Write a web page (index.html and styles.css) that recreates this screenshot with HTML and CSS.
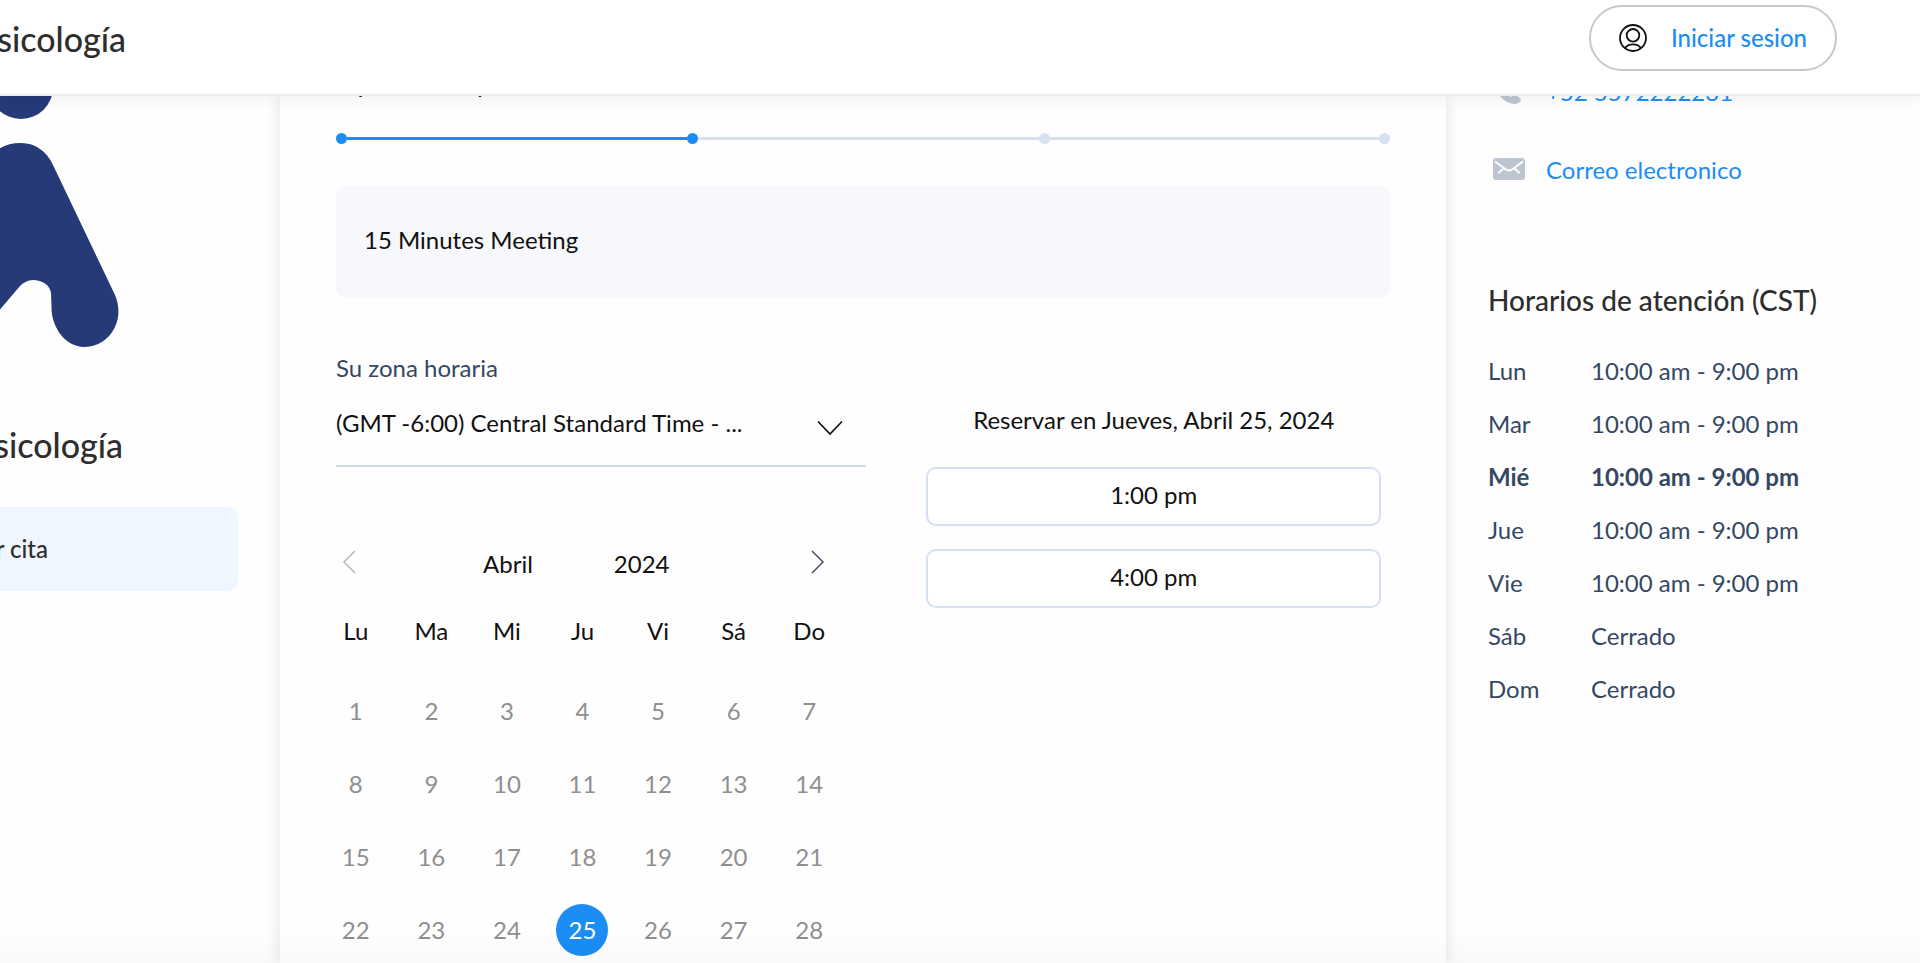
FILE: index.html
```html
<!DOCTYPE html>
<html lang="es">
<head>
<meta charset="utf-8">
<meta name="viewport" content="width=device-width, initial-scale=1">
<title>Psicología - Agendar cita</title>
<link rel="stylesheet" href="styles.css">
</head>
<body>
<header class="topbar">
  <div class="topbar-brand">Psicología</div>
  <button class="login" type="button">
    <svg class="login-icon" viewBox="0 0 28 28" fill="none" stroke="currentColor" stroke-width="1.800" aria-hidden="true">
      <circle cx="14" cy="14" r="13"/>
      <circle cx="14" cy="11.300" r="6.300"/>
      <path d="M6 24.200C7.500 21.700 10.500 20.300 14 20.300s6.500 1.400 8 3.900"/>
    </svg>
    Iniciar sesion
  </button>
</header>

<div class="layout">
  <aside class="profile">
    <svg class="logo" viewBox="0 0 120 252" aria-hidden="true">
      <circle cx="21" cy="-9" r="32"/>
      <path d="M-12 70C-8 54 4 47 21 47C36 47 47 56 53 69L115 199C121 213 119 228 110 239C103 247 94 251 84 251C66 251 51 232 51.500 210L51 197C50 189 42 184 33 184C28 184 23 187 20 190L-20 237Z"/>
    </svg>
    <h2 class="profile-name">Psicología</h2>
    <a class="profile-link" href="#agendar"><span>Agendar cita</span></a>
  </aside>

  <main class="booking" id="agendar">
    <h3 class="step-title">Tipo de cita y hora</h3>
    <ol class="steps" aria-label="Progreso">
      <li class="step step-done"></li>
      <li class="step step-current"></li>
      <li class="step"></li>
      <li class="step step-last"></li>
    </ol>
    <div class="service">15 Minutes Meeting</div>

    <div class="schedule">
      <section class="when">
        <label class="zone-label" for="zone">Su zona horaria</label>
        <div class="zone">
          <select class="zone-select" id="zone">
            <option>(GMT -6:00) Central Standard Time - ...</option>
          </select>
          <svg class="zone-arrow" viewBox="0 0 26 16" fill="none" stroke="currentColor" stroke-width="1.700" aria-hidden="true"><path d="M1 1.500L13 14L25 1.500"/></svg>
        </div>
        <div class="calendar">
          <div class="month-bar">
            <button class="month-nav month-prev" type="button" aria-label="Mes anterior" disabled>
              <svg class="month-arrow" viewBox="0 0 14 24" fill="none" stroke="currentColor" stroke-width="1.500" aria-hidden="true"><path d="M13 1L2 12L13 23"/></svg>
            </button>
            <span class="month">Abril</span>
            <span class="year">2024</span>
            <button class="month-nav month-next" type="button" aria-label="Mes siguiente">
              <svg class="month-arrow" viewBox="0 0 14 24" fill="none" stroke="currentColor" stroke-width="1.500" aria-hidden="true"><path d="M1 1L12 12L1 23"/></svg>
            </button>
          </div>
          <table class="days">
            <thead><tr><th>Lu</th><th>Ma</th><th>Mi</th><th>Ju</th><th>Vi</th><th>Sá</th><th>Do</th></tr></thead>
            <tbody>
              <tr><td>1</td><td>2</td><td>3</td><td>4</td><td>5</td><td>6</td><td>7</td></tr>
              <tr><td>8</td><td>9</td><td>10</td><td>11</td><td>12</td><td>13</td><td>14</td></tr>
              <tr><td>15</td><td>16</td><td>17</td><td>18</td><td>19</td><td>20</td><td>21</td></tr>
              <tr><td>22</td><td>23</td><td>24</td><td><button class="day-selected" type="button">25</button></td><td>26</td><td>27</td><td>28</td></tr>
            </tbody>
          </table>
        </div>
      </section>
      <section class="slots">
        <p class="slots-title">Reservar en Jueves, Abril 25, 2024</p>
        <button class="slot" type="button">1:00 pm</button>
        <button class="slot" type="button">4:00 pm</button>
      </section>
    </div>
  </main>

  <aside class="info">
    <a class="contact" href="#telefono">
      <svg class="contact-icon" viewBox="0 0 32 32" fill="currentColor" aria-hidden="true"><path d="M9 2L13 10L10 14C12 18 14 20 18 21L22 18L28 23C28 26 25 28 21 28C12 27 4 20 3 9C3 5 6 2 9 2Z"/></svg>
      +52 5572222231
    </a>
    <a class="contact" href="#correo">
      <svg class="contact-icon" viewBox="0 0 32 32" aria-hidden="true"><rect y="4" width="32" height="22" rx="3" fill="currentColor"/><path d="M2 7.500L13 15.500Q16 17.500 19 15.500L30 7.500M5.500 19L11 14M26.500 19L21 14" fill="none" stroke="#fff" stroke-width="2"/></svg>
      Correo electronico
    </a>
    <h3 class="hours-title">Horarios de atención (CST)</h3>
    <table class="hours">
      <tr><th>Lun</th><td>10:00 am - 9:00 pm</td></tr>
      <tr><th>Mar</th><td>10:00 am - 9:00 pm</td></tr>
      <tr class="today"><th>Mié</th><td>10:00 am - 9:00 pm</td></tr>
      <tr><th>Jue</th><td>10:00 am - 9:00 pm</td></tr>
      <tr><th>Vie</th><td>10:00 am - 9:00 pm</td></tr>
      <tr><th>Sáb</th><td>Cerrado</td></tr>
      <tr><th>Dom</th><td>Cerrado</td></tr>
    </table>
  </aside>
</div>
<div class="bottom-fade"></div>
</body>
</html>
```
FILE: styles.css
```css
* { box-sizing: border-box; }

body {
  margin: 0;
  height: 100vh;
  overflow: hidden;
  display: flex;
  flex-direction: column;
  background: #fefefe;
  color: #111;
  font-family: Lato, "Liberation Sans", sans-serif;
  font-size: 24px;
  line-height: 32px;
}

button, select { font: inherit; color: inherit; }

.topbar-brand,
.profile-name,
.profile-link,
.hours-title,
.login {
  font-family: "Lato Medium", Lato, "Liberation Sans", sans-serif;
  font-weight: 500;
}

.topbar {
  position: relative;
  z-index: 2;
  flex: none;
  display: flex;
  justify-content: space-between;
  align-items: flex-start;
  padding: 5px 83px 23px 0;
  background: #fff;
  border-bottom: 2px solid #eee;
  box-shadow: 0 2px 16px rgba(0, 0, 0, 0.06);
}

.topbar-brand {
  display: flex;
  justify-content: flex-end;
  width: 126px;
  padding-top: 14px;
  font-size: 34px;
  line-height: 40px;
  color: #2e2e2e;
}

.login {
  display: flex;
  align-items: center;
  gap: 24px;
  height: 66px;
  padding: 0 28px;
  border: 2px solid #c8c8c8;
  border-radius: 33px;
  background: #fff;
  color: #1b8df5;
}

.login-icon { width: 28px; height: 28px; color: #111; }

.layout {
  flex: 1;
  display: flex;
  min-height: 0;
}

.profile {
  width: 280px;
  flex: none;
}

.logo {
  display: block;
  width: 120px;
  height: 252px;
  fill: #253a76;
}

.profile-name {
  display: flex;
  justify-content: flex-end;
  width: 123px;
  margin: 77px 0 42px;
  font-size: 34px;
  line-height: 40px;
  color: #2e2e2e;
}

.profile-link {
  display: block;
  width: 238px;
  padding: 26px 0;
  border-radius: 0 10px 10px 0;
  background: #eff6ff;
  color: #2e2e2e;
  text-decoration: none;
}

.profile-link span {
  display: flex;
  justify-content: flex-end;
  width: 48px;
  white-space: nowrap;
}

.booking {
  flex: 1;
  min-width: 0;
  padding: 0 56px;
  background: #fefefe;
  box-shadow: 0 0 14px rgba(0, 0, 0, 0.12);
}

.step-title {
  margin: -30px 0 35px;
  font-size: 26px;
  line-height: 32px;
  font-weight: 400;
}

.steps {
  display: flex;
  margin: 0 0 42px;
  padding: 0;
  list-style: none;
}

.step {
  flex: 1;
  display: flex;
  align-items: center;
  color: #d7e1ef;
}

.step::before {
  content: "";
  width: 11px;
  height: 11px;
  border-radius: 50%;
  background: currentColor;
}

.step::after {
  content: "";
  flex: 1;
  height: 3px;
  background: currentColor;
}

.step-done, .step-current { color: #1b8df5; }
.step-current::after { background: #d7e1ef; }
.step-last { flex: none; margin-left: -11px; }
.step-last::after { content: none; }

.service {
  padding: 38px 28px 42px;
  border-radius: 10px;
  background: #f6f8fc;
}

.schedule {
  display: flex;
  gap: 60px;
  padding-right: 9px;
}

.when { flex: 531; min-width: 0; }

.zone-label {
  display: block;
  margin: 54px 0 15px;
  color: #344863;
}

.zone {
  display: flex;
  align-items: center;
  padding: 0 23px 18px 0;
  border-bottom: 2px solid #d0d8e6;
}

.zone-select {
  flex: 1;
  min-width: 0;
  height: 48px;
  padding: 0;
  border: 0;
  background: none;
  appearance: none;
}

.zone-arrow { width: 26px; height: 16px; margin-top: 10px; }

.calendar { width: 529px; max-width: 100%; }

.month-bar {
  display: flex;
  align-items: center;
  padding: 0 40px 0 6px;
  margin-top: 81px;
}

.month-nav {
  display: flex;
  padding: 0 0 4px;
  border: 0;
  background: none;
}

.month-arrow { width: 14px; height: 24px; }
.month-prev { color: #b5b7c3; }
.month-next { color: #4c5068; margin-left: auto; }
.month { margin-left: 127px; }
.year { margin-left: 81px; }

.days {
  border-collapse: collapse;
  table-layout: fixed;
  margin: 7px 0 0 -18px;
  width: 529px;
}

.days th, .days td {
  height: 73px;
  padding: 0;
  text-align: center;
  font-weight: 400;
}

.days th { height: 87px; color: #111; }
.days td { color: #8f8f8f; }

.day-selected {
  width: 52px;
  height: 52px;
  padding: 0;
  border: 0;
  border-radius: 50%;
  background: #1b8df5;
  color: #fff;
}

.slots {
  flex: 455;
  display: flex;
  flex-direction: column;
  gap: 23px;
  padding-top: 106px;
}

.slots-title { margin: 0 0 8px; text-align: center; }

.slot {
  height: 59px;
  padding: 0 0 3px;
  border: 2px solid #d5e0f2;
  border-radius: 10px;
  background: #fff;
}

.info {
  flex: none;
  width: 474px;
  padding-left: 42px;
}

.contact {
  display: flex;
  align-items: center;
  gap: 21px;
  margin: 0 0 46px 5px;
  color: #1b8df5;
  text-decoration: none;
}

.contact:first-child { margin-top: -20px; }

.contact-icon { width: 32px; height: 32px; color: #bdc6d0; }

.hours-title {
  margin: 96px 0 26px;
  font-size: 28px;
  line-height: 36px;
  color: #2e2e2e;
}

.hours {
  border-collapse: collapse;
  color: #344863;
}

.hours th, .hours td {
  height: 53px;
  padding: 0;
  text-align: left;
  font-weight: 400;
}

.hours th { width: 103px; }
.hours .today th, .hours .today td { font-weight: 700; }

.bottom-fade {
  position: fixed;
  z-index: 3;
  inset: auto 0 0 0;
  height: 32px;
  background: linear-gradient(transparent, rgba(0, 0, 0, 0.02));
  pointer-events: none;
}
```
